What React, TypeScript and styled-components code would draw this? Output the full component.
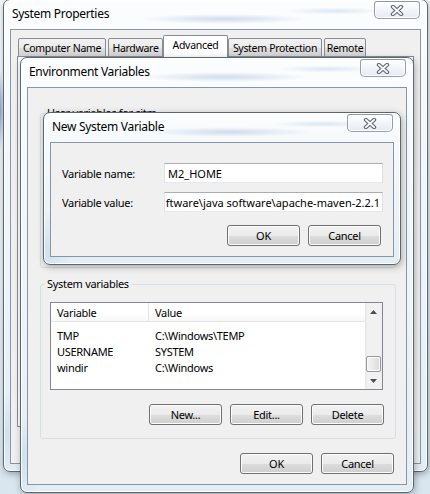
import React from "react";
import styled, { createGlobalStyle } from "styled-components";

const Global = createGlobalStyle`
  html, body { margin: 0; padding: 0; }
  body {
    width: 430px; height: 494px; overflow: hidden;
    font-family: "Noto Sans", "Segoe UI", sans-serif;
    font-size: 11px; letter-spacing: -0.3px; color: #000;
    background: #e6eef5;
  }
  * { box-sizing: border-box; }
`;

const Desktop = styled.div`
  position: relative;
  width: 430px; height: 494px; overflow: hidden;
  background:
    radial-gradient(ellipse 4px 40px at 0px 110px, rgba(60,90,170,.55), transparent),
    linear-gradient(180deg, #f4f8fb 0%, #e6eef5 60%, #d9e5ef 100%);
`;

type Box = { $x: number; $y: number; $w: number; $h: number; $z: number };

const Frame = styled.section<Box>`
  position: absolute;
  left: ${(p) => p.$x}px;
  top: ${(p) => p.$y}px;
  width: ${(p) => p.$w}px;
  height: ${(p) => p.$h}px;
  z-index: ${(p) => p.$z};
  display: flex;
  flex-direction: column;
  padding: 0 6px 7px 6px;
  border: 1px solid #5a6672;
  border-radius: 7px;
  background:
    radial-gradient(ellipse 120px 7px at 52% 19px, rgba(140, 172, 210, 0.4), transparent 70%),
    radial-gradient(ellipse 70px 5px at 78% 11px, rgba(160, 190, 222, 0.35), transparent 70%),
    radial-gradient(ellipse 40px 60px at 0% 92%, rgba(190, 215, 235, 0.6), transparent 70%),
    linear-gradient(180deg, #fbfdfe 0%, #eef4f9 55%, #e4edf5 100%);
  box-shadow: inset 0 0 0 1px rgba(255, 255, 255, 0.9), 1px 2px 7px rgba(0, 0, 0, 0.3);
`;

const TitleBar = styled.header`
  flex: none;
  height: 29px;
  display: flex;
  align-items: flex-start;
  justify-content: space-between;
`;

const Title = styled.h1`
  margin: 0;
  padding: 6px 0 0 2px;
  font-size: 12px;
  font-weight: 400;
  line-height: 16px;
  color: #000;
`;

const CloseButton = styled.button`
  flex: none;
  margin: 1px 1px 0 0;
  width: 46px;
  height: 18px;
  padding: 0;
  border: 1px solid rgba(70, 85, 100, 0.55);
  border-radius: 3px 3px 5px 5px;
  background: linear-gradient(180deg, rgba(255, 255, 255, 0.95), rgba(226, 233, 241, 0.9));
  box-shadow: inset 0 0 0 1px rgba(255, 255, 255, 0.85);
  display: flex;
  align-items: center;
  justify-content: center;
`;

const Client = styled.div<{ $pad: string }>`
  flex: 1;
  min-height: 0;
  display: flex;
  flex-direction: column;
  padding: ${(p) => p.$pad};
  background: #f0f0f0;
  border: 1px solid #8696a6;
`;

/* ---------- tabs ---------- */
const TabStrip = styled.div`
  flex: none;
  display: flex;
  align-items: flex-end;
  height: 22px;
  margin-top: 5px;
  padding-left: 7px;
`;

const Tab = styled.div<{ $w: number; $mr: number; $on?: boolean }>`
  flex: none;
  width: ${(p) => p.$w}px;
  margin-right: ${(p) => p.$mr}px;
  height: ${(p) => (p.$on ? 22 : 19)}px;
  display: flex;
  align-items: center;
  justify-content: center;
  padding-bottom: ${(p) => (p.$on ? 3 : 0)}px;
  font-size: 10.5px;
  border: 1px solid #898c95;
  border-bottom: ${(p) => (p.$on ? "none" : "1px solid #898c95")};
  border-radius: 2px 2px 0 0;
  background: ${(p) =>
    p.$on ? "#ffffff" : "linear-gradient(180deg, #f2f2f2 0%, #ebebeb 50%, #dfdfdf 51%, #d4d4d4 100%)"};
  white-space: nowrap;
  position: relative;
  z-index: ${(p) => (p.$on ? 1 : 0)};
`;

const TabPanel = styled.div`
  flex: 1;
  margin: -1px 6px 36px 6px;
  border: 1px solid #898c95;
  background: #fff;
`;

/* ---------- group box ---------- */
const Group = styled.fieldset<{ $mt: number }>`
  margin: ${(p) => p.$mt}px 0 0 0;
  padding: 10px 12px 13px 9px;
  min-width: 0;
  border: 1px solid #d5dfe5;
  border-radius: 3px;
`;

const Legend = styled.legend`
  margin-left: -5px;
  padding: 0 2px;
  line-height: 16px;
  font-size: 11px;
`;

const GroupFill = styled.div<{ $h: number }>`
  height: ${(p) => p.$h}px;
`;

/* ---------- list view ---------- */
const ListView = styled.div`
  height: 88px;
  display: flex;
  border: 1px solid #828790;
  background: #fff;
`;

const ListMain = styled.div`
  flex: 1;
  min-width: 0;
  display: flex;
  flex-direction: column;
  overflow: hidden;
`;

const Columns = "98px 1fr";

const ListHeader = styled.div`
  flex: none;
  height: 19px;
  display: grid;
  grid-template-columns: ${Columns};
  border-bottom: 1px solid #e5e5e5;
  background: linear-gradient(180deg, #ffffff 0%, #ffffff 55%, #f6f7f9 100%);
`;

const HeadCell = styled.div`
  display: flex;
  align-items: center;
  padding-left: 6px;
  border-right: 1px solid #e5e5e5;
  &:last-child { border-right: none; }
`;

const Rows = styled.div`
  padding-top: 5px;
`;

const Row = styled.div`
  height: 16px;
  display: grid;
  grid-template-columns: ${Columns};
  align-items: center;
`;

const Cell = styled.div`
  padding-left: 6px;
  white-space: nowrap;
  overflow: hidden;
`;

const ScrollBar = styled.div`
  flex: none;
  width: 17px;
  display: flex;
  flex-direction: column;
  background: linear-gradient(90deg, #e6e6e6 0%, #f1f1f1 15%, #f1f1f1 85%, #ececec 100%);
`;

const Arrow = styled.div`
  flex: none;
  height: 17px;
  display: flex;
  align-items: center;
  justify-content: center;
`;

const Track = styled.div`
  flex: 1;
  display: flex;
  flex-direction: column;
  justify-content: flex-end;
`;

const Thumb = styled.div`
  height: 16px;
  margin: 0 1px;
  border: 1px solid #979797;
  border-radius: 2px;
  background: linear-gradient(90deg, #f5f5f5 0%, #e9e9e9 50%, #dadada 100%);
  box-shadow: inset 0 0 0 1px #fbfbfb;
`;

/* ---------- buttons & fields ---------- */
const ButtonRow = styled.div<{ $mt: number; $mr: number }>`
  flex: none;
  display: flex;
  justify-content: flex-end;
  gap: 8px;
  margin-top: ${(p) => p.$mt}px;
  margin-right: ${(p) => p.$mr}px;
`;

const Button = styled.button`
  width: 73px;
  height: 21px;
  padding: 0 0 1px;
  font: inherit;
  letter-spacing: inherit;
  color: #000;
  border: 1px solid #707070;
  border-radius: 3px;
  background: linear-gradient(180deg, #f2f2f2 0%, #ebebeb 50%, #dddddd 51%, #cfcfcf 100%);
  box-shadow: inset 0 0 0 1px #fcfcfc;
`;

const FormGrid = styled.div`
  display: grid;
  grid-template-columns: 102px 1fr;
  row-gap: 9px;
  align-items: center;
`;

const Label = styled.label`
  white-space: nowrap;
`;

const Field = styled.div<{ $end?: boolean }>`
  height: 20px;
  min-width: 0;
  display: flex;
  align-items: center;
  justify-content: ${(p) => (p.$end ? "flex-end" : "flex-start")};
  padding: 0 2px 0 1px;
  overflow: hidden;
  white-space: nowrap;
  letter-spacing: 0;
  background: #fff;
  border: 1px solid;
  border-color: #abadb3 #dbdfe6 #e3e9ef #e2e3ea;
`;

const FieldText = styled.span`
  padding-left: 2px;
`;

const CloseGlyph = () => (
  <svg width="14" height="11" viewBox="0 0 14 11">
    <path d="M2.8 1.8 L11.2 9.2 M11.2 1.8 L2.8 9.2" stroke="#5d6671" strokeWidth="4" strokeLinecap="round" fill="none" />
    <path d="M2.8 1.8 L11.2 9.2 M11.2 1.8 L2.8 9.2" stroke="#fbfbfb" strokeWidth="1.8" strokeLinecap="round" fill="none" />
  </svg>
);

const UpGlyph = () => (
  <svg width="7" height="4" viewBox="0 0 7 4">
    <path d="M0 4 L3.5 0 L7 4 Z" fill="#4a4e54" />
  </svg>
);

const DownGlyph = () => (
  <svg width="7" height="4" viewBox="0 0 7 4">
    <path d="M0 0 L3.5 4 L7 0 Z" fill="#4a4e54" />
  </svg>
);

type Var = { name: string; value: string };

const VarList = ({ rows }: { rows: Var[] }) => (
  <ListView>
    <ListMain>
      <ListHeader>
        <HeadCell>Variable</HeadCell>
        <HeadCell>Value</HeadCell>
      </ListHeader>
      <Rows>
        {rows.map((r) => (
          <Row key={r.name}>
            <Cell>{r.name}</Cell>
            <Cell>{r.value}</Cell>
          </Row>
        ))}
      </Rows>
    </ListMain>
    <ScrollBar>
      <Arrow>
        <UpGlyph />
      </Arrow>
      <Track>
        <Thumb />
      </Track>
      <Arrow>
        <DownGlyph />
      </Arrow>
    </ScrollBar>
  </ListView>
);

const systemVars: Var[] = [
  { name: "TMP", value: "C:\\Windows\\TEMP" },
  { name: "USERNAME", value: "SYSTEM" },
  { name: "windir", value: "C:\\Windows" },
];

const tabs = [
  { label: "Computer Name", w: 88, mr: 2 },
  { label: "Hardware", w: 55, mr: 0 },
  { label: "Advanced", w: 65, mr: 0, on: true },
  { label: "System Protection", w: 94, mr: 2 },
  { label: "Remote", w: 42, mr: 0 },
];

export default function App() {
  return (
    <>
      <Global />
      <Desktop>
        <Frame $x={3} $y={-1} $w={425} $h={473} $z={1}>
          <TitleBar>
            <Title>System Properties</Title>
            <CloseButton aria-label="Close">
              <CloseGlyph />
            </CloseButton>
          </TitleBar>
          <Client $pad="0">
            <TabStrip>
              {tabs.map((t) => (
                <Tab key={t.label} $w={t.w} $mr={t.mr} $on={t.on}>
                  {t.label}
                </Tab>
              ))}
            </TabStrip>
            <TabPanel />
          </Client>
        </Frame>

        <Frame $x={20} $y={57} $w={394} $h={436} $z={2}>
          <TitleBar>
            <Title>Environment Variables</Title>
            <CloseButton aria-label="Close">
              <CloseGlyph />
            </CloseButton>
          </TitleBar>
          <Client $pad="0 10px 11px 12px">
            <Group $mt={17}>
              <Legend>User variables for sitm</Legend>
              <GroupFill $h={123} />
            </Group>
            <Group $mt={8}>
              <Legend>System variables</Legend>
              <VarList rows={systemVars} />
              <ButtonRow $mt={14} $mr={-1}>
                <Button>New...</Button>
                <Button>Edit...</Button>
                <Button>Delete</Button>
              </ButtonRow>
            </Group>
            <ButtonRow $mt={14} $mr={2}>
              <Button>OK</Button>
              <Button>Cancel</Button>
            </ButtonRow>
          </Client>
        </Frame>

        <Frame $x={43} $y={112} $w={358} $h={153} $z={3}>
          <TitleBar>
            <Title>New System Variable</Title>
            <CloseButton aria-label="Close">
              <CloseGlyph />
            </CloseButton>
          </TitleBar>
          <Client $pad="20px 10px 11px 11px">
            <FormGrid>
              <Label>Variable name:</Label>
              <Field>
                <FieldText>M2_HOME</FieldText>
              </Field>
              <Label>Variable value:</Label>
              <Field $end>
                <FieldText>ftware\java software\apache-maven-2.2.1</FieldText>
              </Field>
            </FormGrid>
            <ButtonRow $mt={13} $mr={2}>
              <Button>OK</Button>
              <Button>Cancel</Button>
            </ButtonRow>
          </Client>
        </Frame>
      </Desktop>
    </>
  );
}
